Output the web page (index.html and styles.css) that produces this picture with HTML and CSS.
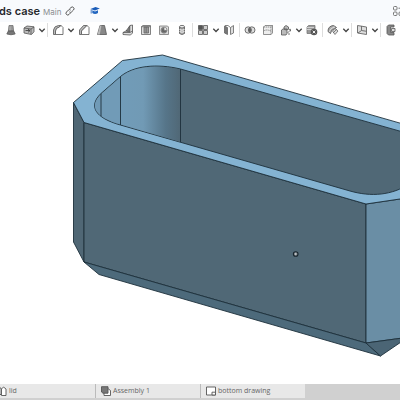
FILE: index.html
```html
<!DOCTYPE html>
<html lang="en">
<head>
<meta charset="utf-8">
<title>ds case</title>
<link rel="stylesheet" href="styles.css">
</head>
<body>
<svg class="defs" aria-hidden="true">
  <symbol id="chev" viewBox="0 0 8 12"><path d="M1.300 4.800 4 7.500 6.700 4.800" fill="none" stroke="#444" stroke-width="1.300"/></symbol>
</svg>
<header class="header">
  <h1 class="title">ds case</h1>
  <span class="branch">Main</span>
  <button class="link" aria-label="Copy link"><svg viewBox="0 0 10 10" fill="none" stroke="#555" stroke-width="1"><path d="M4.300 3.200 6 1.500a1.700 1.700 0 0 1 2.500 2.500L6.600 5.900a1.600 1.600 0 0 1-2.200 0M5.700 6.800 4 8.500A1.700 1.700 0 0 1 1.500 6L3.400 4.100a1.600 1.600 0 0 1 2.200 0"/></svg></button>
  <a class="learn" href="#" aria-label="Learning center"><svg viewBox="0 0 10 10"><path d="M.5 3 5.500 1 9.800 2.500 5 4.600z" fill="#1b5cb8"/><path d="M2.300 4.300 5 5.500 8 4.200V7Q5 8.800 2.300 7z" fill="#2467c0"/><path d="M1.200 3.500v4" stroke="#1b5cb8" stroke-width=".8"/></svg></a>
  <button class="apps" aria-label="Apps"><svg viewBox="0 0 12 12" fill="none" stroke="#777" stroke-width="1"><rect x="1.500" y="1.500" width="3.500" height="3.500" rx="1"/><rect x="1.500" y="7" width="3.500" height="3.500" rx="1"/><rect x="7" y="7" width="3.500" height="3.500" rx="1"/><path d="M8.800 1v4.500M6.500 3.200H11"/></svg></button>
</header>
<nav class="toolbar" aria-label="Feature tools">
  <button class="tool" aria-label="Loft"><svg viewBox="0 0 12 12"><path d="M4 1.500h4l.6 5.500H3.400z" fill="#999" stroke="#666" stroke-width=".7"/><path d="M3.300 7 1.800 10Q6 11.500 10.200 10L8.700 7z" fill="#777" stroke="#555" stroke-width=".7"/><path d="M5 2.500v4" stroke="#ccc" stroke-width=".6"/></svg></button>
  <button class="tool" aria-label="Thicken"><svg viewBox="0 0 12 12" stroke="#555" stroke-width=".8"><path d="M1 4 4 2l7 .8v5L8.500 10.500 1 9z" fill="#bbb"/><path d="M1 4l7 1v5.300M8 5l3-2" fill="none"/><path d="M2.500 6.500h4M5 5l2 1.700L5 8.300" fill="none" stroke="#333"/></svg></button>
  <button class="chev" aria-label="More solids"><svg><use href="#chev"/></svg></button><span class="sep"></span>
  <button class="tool" aria-label="Fillet"><svg viewBox="0 0 12 12" stroke="#555" stroke-width=".8"><path d="M1.500 10.500V6Q2 2 6.500 1.500H9L7.500 3Q4 3.500 3.500 7v3.500z" fill="#bbb"/><path d="M3.500 10.500V7Q4 3.500 7.500 3l1.500-1.500 2 2v7z" fill="#fff"/></svg></button>
  <button class="chev" aria-label="More fillets"><svg><use href="#chev"/></svg></button>
  <button class="tool" aria-label="Chamfer"><svg viewBox="0 0 12 12" stroke="#555" stroke-width=".8"><path d="M1.500 10.500V6l4-4.500H9L7.500 3l-4 4v3.500z" fill="#bbb"/><path d="M3.500 10.500V7l4-4L9 1.500l2 2v7z" fill="#fff"/></svg></button>
  <button class="tool" aria-label="Draft"><svg viewBox="0 0 12 12"><path d="M4 1.500h4.500l2 9H1.500z" fill="#888" stroke="#555" stroke-width=".8"/><path d="M4 1.500 1.500 10.500h2.300L5.500 1.500z" fill="#bbb"/></svg></button>
  <button class="chev" aria-label="More drafts"><svg><use href="#chev"/></svg></button>
  <button class="tool" aria-label="Rib"><svg viewBox="0 0 12 12" stroke="#555" stroke-width=".8"><path d="M1 8.500 4 7l4-5.500 2.500-.5v8L8.500 11 1 10.500z" fill="#ddd"/><path d="M4 7q3-1 3.800-5.200V8z" fill="#777"/><path d="M1 8.500h7l2.500-1.500" fill="none"/></svg></button>
  <button class="tool" aria-label="Shell"><svg viewBox="0 0 12 12" stroke="#666" stroke-width=".8"><path d="M1.500 2.500 3 1.500h7.500v9h-9z" fill="#ddd"/><path d="M4 3h4.500v6H4z" fill="#999"/><path d="M1.500 2.700h9M6.200 3v6" fill="none"/></svg></button>
  <button class="tool" aria-label="Hole"><svg viewBox="0 0 12 12" stroke="#777" stroke-width=".8"><path d="M1.500 2h8l1 1v7.500h-9z" fill="#ddd"/><circle cx="6" cy="6.200" r="3" fill="#fff"/><path d="M6 3.800a2.500 2.500 0 1 0 2.500 2.500H6z" fill="#666"/></svg></button>
  <button class="tool" aria-label="External thread"><svg viewBox="0 0 12 12" stroke="#555" stroke-width=".8"><path d="M3.500 3v6.500q2.500 2 5 0V3z" fill="#aaa"/><ellipse cx="6" cy="2.700" rx="2.500" ry="1.300" fill="#eee"/><path d="M3.500 5.500q2.500 1.500 5 0M3.500 7.500q2.500 1.500 5 0" fill="none" stroke="#fff"/></svg></button>
  <span class="sep"></span>
  <button class="tool" aria-label="Linear pattern"><svg viewBox="0 0 12 12" stroke="#555" stroke-width=".8"><path d="M1.500 1.500h4v4h-4z" fill="#555"/><path d="M6.500 1.500h4v4h-4zM1.500 6.500h4v4h-4zM6.500 6.500h4v4h-4z" fill="#ccc"/></svg></button>
  <button class="chev" aria-label="More patterns"><svg><use href="#chev"/></svg></button>
  <button class="tool" aria-label="Mirror"><svg viewBox="0 0 12 12" stroke="#666" stroke-width=".8"><path d="M1.500 2 4.500 3.500v7L1.500 9z" fill="#777"/><path d="M7.500 3.500l3-2v7.500l-3 1.500z" fill="#ddd"/><path d="M2 1.500h3L7.500 3.500" fill="none"/></svg></button>
  <span class="sep"></span>
  <button class="tool" aria-label="Boolean"><svg viewBox="0 0 12 12" stroke="#555" stroke-width=".8"><circle cx="4.200" cy="6" r="3.200" fill="#ddd"/><circle cx="7.800" cy="6" r="3.200" fill="#ddd"/><path d="M6 3.400a3.200 3.200 0 0 1 0 5.200 3.200 3.200 0 0 1 0-5.200" fill="#666"/></svg></button>
  <button class="tool" aria-label="Split"><svg viewBox="0 0 12 12" stroke="#777" stroke-width=".8" fill="#eee"><path d="M1.500 3 3 1.500h7.500V9L9 10.500H1.500z"/><path d="M1.500 3H9l1.500-1.500M9 3v7.500M1.500 7q3-2 7.500 0" fill="none" stroke-dasharray="1.500 .6"/></svg></button>
  <button class="tool" aria-label="Transform"><svg viewBox="0 0 12 12" stroke="#555" stroke-width=".8"><path d="M1.500 6 3 5h4v4.500L6 11H1.500zM4 3 6 1.500 8.500 3v2L6 6 4 5z" fill="#bbb"/><path d="M7.500 9 10.500 6M8.500 5.500l2-.2v2M8 10h2" fill="none"/></svg></button>
  <button class="chev" aria-label="More transforms"><svg><use href="#chev"/></svg></button>
  <button class="tool" aria-label="Delete part"><svg viewBox="0 0 12 12"><path d="M1 3l1.500-1.500H9V8L7.500 9.500H1z" fill="#999" stroke="#777" stroke-width=".8"/><path d="M1 3.500h7M1 5.500h5" stroke="#ddd" stroke-width=".8"/><circle cx="8" cy="8" r="3.300" fill="#555"/><path d="m6.700 6.700 2.600 2.600m0-2.600L6.700 9.300" stroke="#fff" stroke-width=".9"/></svg></button>
  <span class="sep"></span>
  <button class="tool" aria-label="Modify face"><svg viewBox="0 0 12 12" fill="none" stroke="#666" stroke-width="1"><path d="M1 7.500Q1 2 6.500 1.500L9.500 3.500 7 5Q4 5.500 3.500 9.500z" fill="#aaa"/><path d="M2.500 8Q3 4 8 3" stroke="#eee" stroke-width=".7"/><path d="M5.500 7 8 4.500 11 7l-3 3.500z" fill="#ddd" stroke-width=".8"/><path d="m6 9 4-4" stroke-width=".8"/></svg></button>
  <button class="chev" aria-label="More faces"><svg><use href="#chev"/></svg></button>
  <span class="sep"></span>
  <button class="tool" aria-label="Plane"><svg viewBox="0 0 12 12" stroke="#666" stroke-width=".9"><path d="M1.500 1.500 10.500 3v7.500l-9-1.500z" fill="#ddd"/><path d="M5.500 2v4.500l5 .8M5.500 6.500 2 9" fill="none"/></svg></button>
  <button class="chev" aria-label="More planes"><svg><use href="#chev"/></svg></button>
  <span class="sep"></span>
  <button class="tool" aria-label="Frame"><svg viewBox="0 0 12 12" stroke="#555" stroke-width=".8"><path d="M2 2.500 3.500 1H9v2H5.500v5.500H9V11H3.500L2 9.500z" fill="#888"/><path d="M6.500 4.500H10v3H6.500z" fill="#ddd"/></svg></button>
</nav>
<main class="canvas">
  <svg class="model" viewBox="0 38 400 346" preserveAspectRatio="xMidYMid slice" role="img" aria-label="Case model">
    <defs>
      <linearGradient id="bore" gradientUnits="userSpaceOnUse" x1="120" y1="0" x2="181" y2="0">
        <stop offset="0" stop-color="#719cb8"/><stop offset=".38" stop-color="#719ab5"/><stop offset=".75" stop-color="#567589"/><stop offset="1" stop-color="#506775"/>
      </linearGradient>
    </defs>
    <g stroke="#1d303b" stroke-width=".9" stroke-linejoin="round">
      <path fill="#506775" d="M73.500 102.500 84 122.500V262L73.500 242z"/>
      <path fill="#506876" d="M84 122.500 366 204V343L84 262z"/>
      <path fill="#6a8ea5" d="M366 204 410 197.500V337L366 343z"/>
      <path fill="#4d6a7b" d="M84 262 366 343 380.500 356 99 274.500z"/>
      <path fill="#4b6575" d="M366 343 408 337.300 380.500 356z"/>
      <path fill="#84b3d2" d="M73.500 102.500 122.500 60.500 162.500 55 410 126V197.500L366 204 84 122.500z"/>
      <path fill="#506876" d="M101 93.500 120.500 76.500C134 65.500 157 63.500 180.500 69L410 134V183.500C392 195.500 371 197 350 191L120.500 125C95 118 88 106 101 93.500z"/>
      <path fill="url(#bore)" stroke="none" d="M120.500 77C134 66 157 64 180.500 69.500V142L120.500 124.500z"/>
      <path fill="#719bb7" stroke="none" d="M101 94 120.500 77V124.500C95 117.500 88.500 106 101 94z"/>
      <path fill="none" d="M101 93.500V116M120.500 76.500V125M180.500 69V142"/>
    </g>
    <circle cx="295.700" cy="254" r="2.300" fill="#899197" stroke="#17242c" stroke-width="1.100"/>
    <circle cx="295.700" cy="254" r=".7" fill="#ddd"/>
  </svg>
</main>
<nav class="tabs" aria-label="Document tabs">
  <a class="tab first" href="#"><svg viewBox="0 0 10 10" fill="#fff" stroke="#555" stroke-width=".9"><path d="M.5 4v4.500H4V2H2z"/><path d="M4.500 3 6.500 1 9 3v6.500H4.500z"/></svg>lid</a>
  <a class="tab" href="#"><svg viewBox="0 0 10 10" stroke="#555" stroke-width=".9"><path d="M3 3h4.500L9.500 4.500v5H3z" fill="#fff"/><path d="M.5.7h6.500v6.500H2L.5 6z" fill="#777"/></svg>Assembly 1</a>
  <a class="tab" href="#"><svg viewBox="0 0 10 10" fill="#fff" stroke="#555" stroke-width=".9"><path d="M.5 1h9v8h-9z"/><path d="M6 6.200h3.500V9H6z"/></svg>bottom drawing</a>
</nav>
</body>
</html>
```
FILE: styles.css
```css
* { box-sizing: border-box; }
body {
  margin: 0;
  height: 100vh;
  display: flex;
  flex-direction: column;
  overflow: hidden;
  background: #fff;
  color: #26282c;
  font-family: Inter, "Liberation Sans", sans-serif;
}
button { padding: 0; border: 0; background: none; display: flex; align-items: center; justify-content: center; flex: none; }
svg { display: block; }
.defs { position: absolute; width: 0; height: 0; }
.header { height: 22px; flex: none; display: flex; align-items: center; background: #f8fafd; }
.title { margin: 0 3px 0 -1px; font-size: 11px; line-height: 22px; font-weight: 600; white-space: nowrap; }
.branch { padding-top: 2px; font-size: 8px; color: #8a8d91; }
.link { margin-left: 4px; }
.link svg, .learn svg { width: 10px; height: 10px; }
.learn { margin-left: 15px; }
.apps { margin-left: auto; margin-right: -4px; }
.apps svg { width: 12px; height: 12px; }
.toolbar { height: 16px; flex: none; display: flex; align-items: center; padding-left: 2px; background: #fff; }
.tool { width: 18px; height: 16px; }
.tool svg { width: 12px; height: 12px; }
.chev { width: 8px; height: 16px; }
.chev svg { width: 8px; height: 12px; }
.sep { width: 1px; height: 14px; margin: 0 1px; background: #ddd; flex: none; }
.canvas { flex: 1; min-height: 0; }
.model { width: 100%; height: 100%; }
.tabs { height: 16px; flex: none; display: flex; padding-bottom: 2px; background: #d0d0d0; }
.tab {
  width: 105px;
  display: flex;
  align-items: center;
  gap: 2px;
  padding-left: 5px;
  border-left: 1px solid #bbb;
  background: #e8e8e8;
  color: #666;
  font-family: "Open Sans", sans-serif;
  font-size: 7px;
  font-weight: 500;
  line-height: 16px;
  text-decoration: none;
  white-space: nowrap;
}
.tab svg { width: 10px; height: 10px; }
.first { width: 99px; padding-left: 0; margin-left: -4px; }
```
